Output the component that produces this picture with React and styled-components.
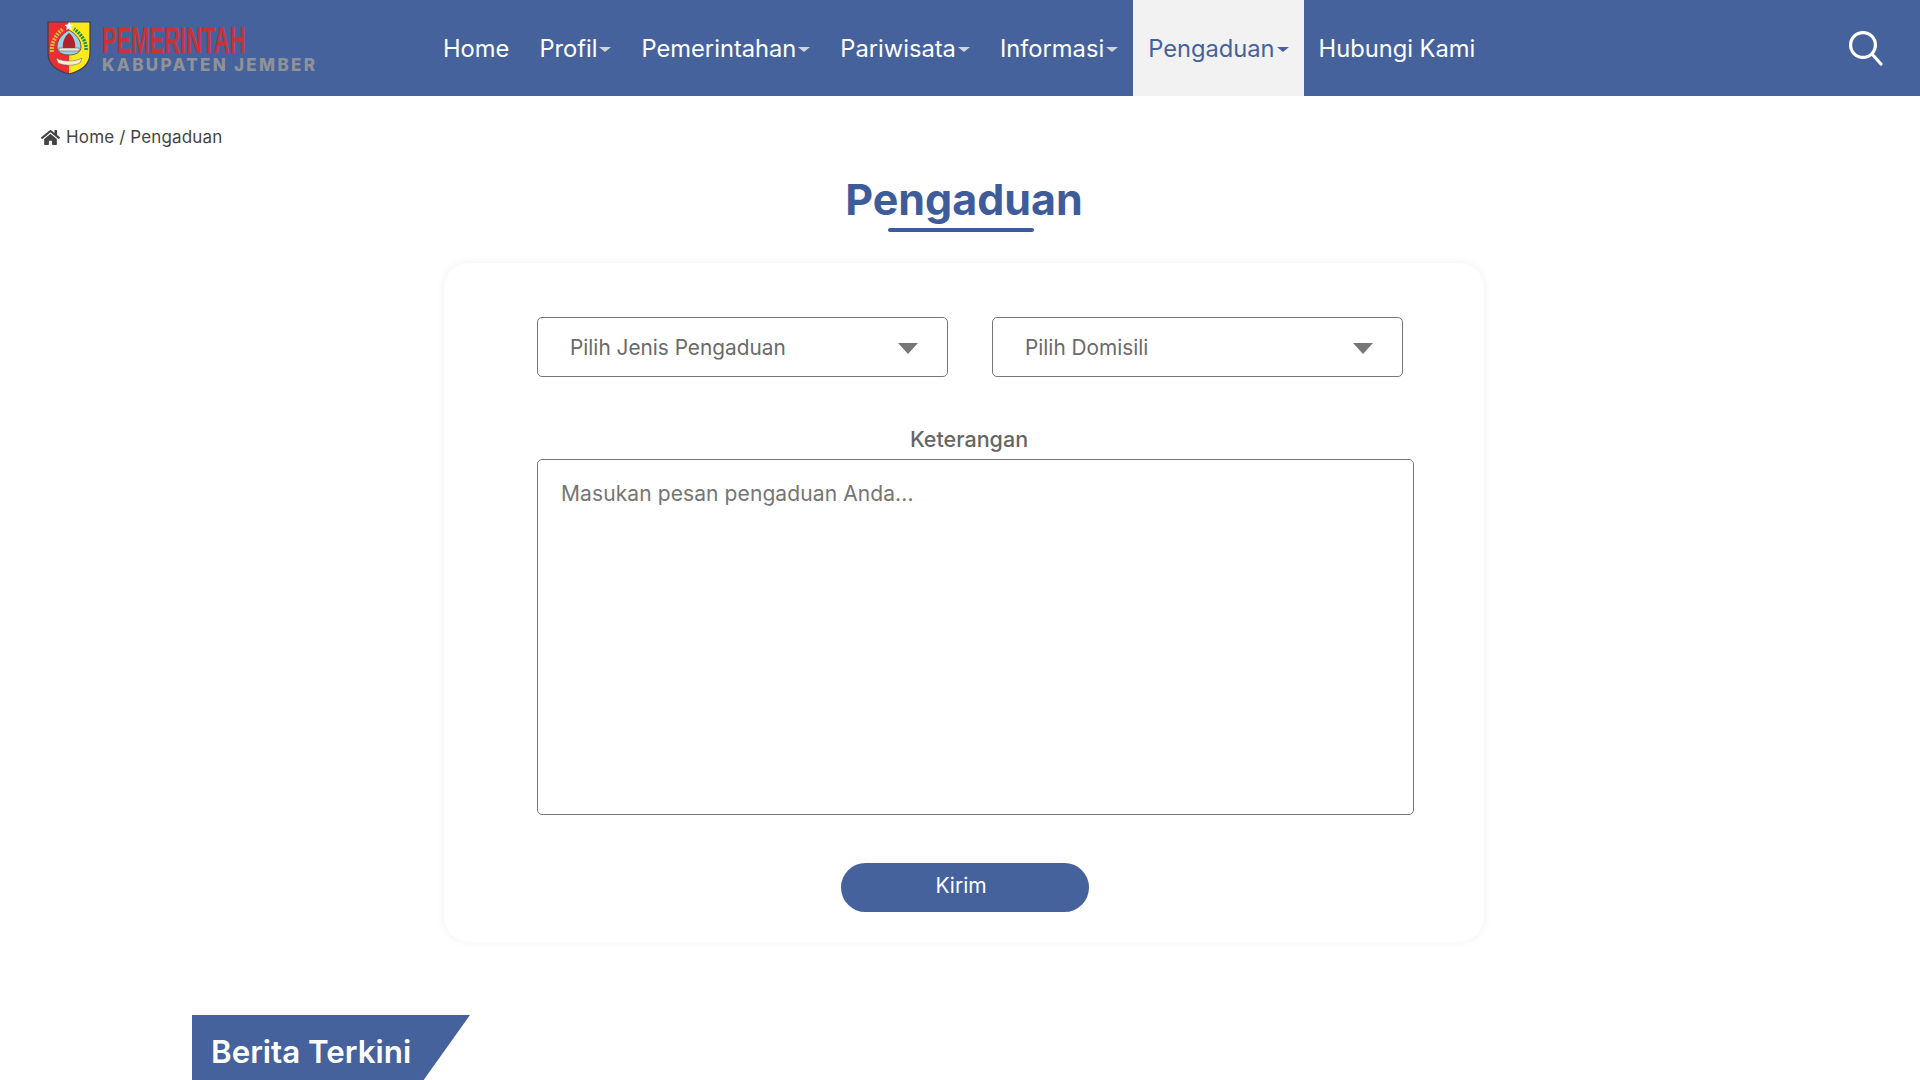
import React from 'react';
import styled, { createGlobalStyle } from 'styled-components';
import { FaHome } from 'react-icons/fa';

const blue = '#45629d';

const GlobalStyle = createGlobalStyle`
  html, body {
    margin: 0;
    padding: 0;
    background: #fff;
    overflow: hidden;
  }
  #root {
    height: 1080px;
    overflow: hidden;
  }
  * { box-sizing: border-box; }
`;

const Header = styled.header`
  display: flex;
  align-items: stretch;
  height: 96px;
  background: ${blue};
  padding: 0 36px 0 47px;
  font-family: Inter, sans-serif;
`;

const Logo = styled.div`
  display: flex;
  align-items: center;
  gap: 11px;
  width: 381px;
  flex: none;
`;

const LogoText = styled.div`
  display: flex;
  flex-direction: column;
  margin-top: 3px;
`;

const LogoTitle = styled.span`
  font-family: 'Liberation Sans', sans-serif;
  font-weight: 700;
  font-size: 36px;
  line-height: 30px;
  color: #c4343a;
  transform: scaleX(0.61);
  transform-origin: left center;
  white-space: nowrap;
`;

const LogoSub = styled.span`
  font-family: Inter, sans-serif;
  font-weight: 800;
  font-size: 17px;
  line-height: 18px;
  letter-spacing: 2.3px;
  color: #8f9296;
  white-space: nowrap;
`;

const Nav = styled.nav`
  display: flex;
  align-items: stretch;
`;

const NavItem = styled.a`
  display: flex;
  align-items: center;
  padding: 0 15px;
  font-size: 23.7px;
  font-weight: 400;
  color: ${props => (props.$active ? blue : '#fff')};
  background: ${props => (props.$active ? '#f2f2f2' : 'transparent')};
`;

const Caret = styled.span`
  width: 0;
  height: 0;
  margin-left: 2px;
  margin-top: 2px;
  border-left: 6px solid transparent;
  border-right: 6px solid transparent;
  border-top: 5px solid ${props => (props.$active ? blue : '#d2d4d8')};
`;

const SearchButton = styled.div`
  display: flex;
  align-items: center;
  margin-left: auto;
`;

const Breadcrumb = styled.div`
  display: flex;
  align-items: center;
  gap: 6px;
  padding: 30px 0 0 41px;
  height: 52px;
  font-family: Inter, sans-serif;
  font-size: 17px;
  letter-spacing: 0.15px;
  line-height: 22px;
  color: #444;
`;

const Main = styled.main`
  padding-left: 8px;
`;

const Title = styled.h1`
  position: relative;
  margin: 21px 0 0;
  height: 63px;
  text-align: center;
  font-family: Inter, sans-serif;
  font-weight: 700;
  font-size: 43px;
  line-height: 61px;
  color: #3f5c9a;
  &::after {
    content: '';
    position: absolute;
    left: calc(50% - 76px);
    bottom: 0;
    width: 146px;
    height: 4px;
    border-radius: 2px;
    background: #3f5c9a;
  }
`;

const Card = styled.form`
  width: 1040px;
  height: 679px;
  margin: 31px auto 0;
  padding: 54px 70px 0 93px;
  background: #fff;
  border-radius: 25px;
  box-shadow: 0 0 10px rgba(0, 0, 0, 0.06);
  font-family: Inter, sans-serif;
`;

const SelectRow = styled.div`
  display: flex;
  gap: 44px;
`;

const SelectWrap = styled.div`
  position: relative;
  width: 411px;
  height: 60px;
  &::after {
    content: '';
    position: absolute;
    right: 30px;
    top: 26px;
    width: 0;
    height: 0;
    border-left: 10px solid transparent;
    border-right: 10px solid transparent;
    border-top: 11px solid #777;
    pointer-events: none;
  }
`;

const Select = styled.select`
  width: 100%;
  height: 100%;
  padding: 0 32px;
  border: 1px solid #777;
  border-radius: 5px;
  background: #fff;
  appearance: none;
  font-family: inherit;
  font-size: 20.8px;
  color: #6a6a6a;
`;

const Label = styled.label`
  display: block;
  margin-top: 45px;
  padding-bottom: 3px;
  width: 864px;
  text-align: center;
  font-size: 21.5px;
  line-height: 34px;
  font-weight: 500;
  color: #666;
`;

const Textarea = styled.textarea`
  display: block;
  width: 877px;
  height: 356px;
  padding: 17px 23px;
  border: 1px solid #777;
  border-radius: 5px;
  resize: none;
  outline: none;
  font-family: inherit;
  font-size: 21px;
  letter-spacing: 0.1px;
  line-height: 34px;
  color: #6a6a6a;
  &::placeholder {
    color: #757575;
  }
`;

const Actions = styled.div`
  display: flex;
  margin: 48px 0 0 304px;
`;

const SubmitButton = styled.button`
  width: 248px;
  height: 49px;
  padding: 0 8px 5px 0;
  border: none;
  border-radius: 25px;
  background: ${blue};
  color: #fff;
  font-family: inherit;
  font-size: 21px;
`;

const LatestSection = styled.section`
  margin: 73px 0 0 192px;
`;

const LatestTitle = styled.h2`
  width: 278px;
  height: 78px;
  margin: 0;
  padding: 16px 0 0 19px;
  background: ${blue};
  clip-path: polygon(0 0, 100% 0, 80% 100%, 0 100%);
  font-family: Inter, sans-serif;
  font-weight: 600;
  font-size: 31.3px;
  line-height: 42px;
  color: #fff;
`;

const SearchIcon = () => (
  <svg width="36" height="38" viewBox="0 0 36 38" fill="none" stroke="#fff" strokeWidth="3.2" strokeLinecap="round">
    <circle cx="15" cy="16" r="12.4" />
    <path d="M24 25L33 35" />
  </svg>
);

const Shield = () => (
  <svg width="44" height="54" viewBox="0 0 44 54" style={{ flex: 'none' }}>
    <path d="M1 1H22V53C10 50 1 44 1 32Z" fill="#ee2c34" />
    <path d="M22 1H43V32C43 44 34 50 22 53Z" fill="#fde91c" />
    <path d="M1 1H43V32C43 44 34 50 22 53C10 50 1 44 1 32Z" fill="none" stroke="#3c3f45" strokeWidth="1.2" />
    <path d="M5 31C4 22 9 13 16 8" fill="none" stroke="#d9b93a" strokeWidth="4" strokeDasharray="2 1" />
    <path d="M39 29C40 21 34 13 27 8" fill="none" stroke="#1e8f4c" strokeWidth="3.5" strokeDasharray="2 1" />
    <path d="M22 9C29 13 34 19 34 26C34 31 29 34 22 34C15 34 10 31 10 26C10 19 15 13 22 9Z" fill="#9dd0e4" stroke="#6b5a3c" strokeWidth="1" />
    <path d="M22 12C27 16 29 22 28 29H16C15 22 17 16 22 12Z" fill="#b3222c" />
    <rect x="12" y="27" width="20" height="3" fill="#e9e6da" stroke="#555" strokeWidth="0.5" />
    <path d="M9 37C16 41 28 41 35 37L33 42C26 45 18 45 11 42Z" fill="#f6f0cf" stroke="#555" strokeWidth="0.5" />
    <path d="M22 1L23.4 3.6L26.5 4L24.2 6L24.8 9L22 7.6L19.2 9L19.8 6L17.5 4L20.6 3.6Z" fill="#fff" />
  </svg>
);

const navItems = [
  { label: 'Home' },
  { label: 'Profil', caret: true },
  { label: 'Pemerintahan', caret: true },
  { label: 'Pariwisata', caret: true },
  { label: 'Informasi', caret: true },
  { label: 'Pengaduan', caret: true, active: true },
  { label: 'Hubungi Kami' },
];

const App = () => {
  return (
    <>
      <GlobalStyle />
      <Header>
        <Logo>
          <Shield />
          <LogoText>
            <LogoTitle>PEMERINTAH</LogoTitle>
            <LogoSub>KABUPATEN JEMBER</LogoSub>
          </LogoText>
        </Logo>
        <Nav>
          {navItems.map(item => (
            <NavItem key={item.label} $active={item.active}>
              {item.label}
              {item.caret && <Caret $active={item.active} />}
            </NavItem>
          ))}
        </Nav>
        <SearchButton>
          <SearchIcon />
        </SearchButton>
      </Header>
      <Breadcrumb>
        <FaHome size={19} />
        <span>Home / Pengaduan</span>
      </Breadcrumb>
      <Main>
        <Title>Pengaduan</Title>
        <Card>
          <SelectRow>
            <SelectWrap>
              <Select defaultValue="">
                <option value="">Pilih Jenis Pengaduan</option>
              </Select>
            </SelectWrap>
            <SelectWrap>
              <Select defaultValue="">
                <option value="">Pilih Domisili</option>
              </Select>
            </SelectWrap>
          </SelectRow>
          <Label>Keterangan</Label>
          <Textarea placeholder="Masukan pesan pengaduan Anda..." />
          <Actions>
            <SubmitButton type="button">Kirim</SubmitButton>
          </Actions>
        </Card>
      </Main>
      <LatestSection>
        <LatestTitle>Berita Terkini</LatestTitle>
      </LatestSection>
    </>
  );
};

export default App;
